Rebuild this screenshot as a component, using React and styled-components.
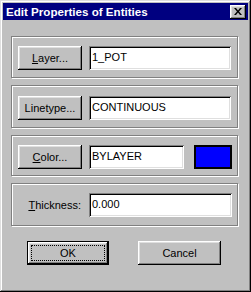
import React from "react"
import styled, { createGlobalStyle } from "styled-components"

const Global = createGlobalStyle`
  html, body {
    margin: 0;
    padding: 0;
    background: #c0c0c0;
  }
  * { box-sizing: border-box; }
`

const Window = styled.div`
  width: 251px;
  height: 292px;
  padding: 3px;
  background: #c0c0c0;
  font-family: "Liberation Sans", Arial, sans-serif;
  font-size: 11px;
  color: #000;
  box-shadow: inset -1px -1px #000, inset 1px 1px #dfdfdf,
    inset -2px -2px #808080, inset 2px 2px #fff;
  display: flex;
  flex-direction: column;
`

const TitleBar = styled.div`
  height: 17px;
  background: #000080;
  color: #fff;
  display: flex;
  align-items: center;
  justify-content: space-between;
  padding: 0 2px 0 3px;
`

const Title = styled.span`
  font-weight: bold;
  font-size: 11.6px;
  line-height: 17px;
`

const CloseBtn = styled.div`
  width: 16px;
  height: 14px;
  background: #c0c0c0;
  display: flex;
  align-items: center;
  justify-content: center;
  box-shadow: inset -1px -1px #000, inset 1px 1px #fff,
    inset -2px -2px #808080, inset 2px 2px #dfdfdf;
`

const Body = styled.div`
  padding: 16px 0 0 8px;
  display: flex;
  flex-direction: column;
`

const Groups = styled.div`
  display: flex;
  flex-direction: column;
  gap: 7px;
`

const Group = styled.div`
  width: 227px;
  height: ${p => p.$h}px;
  border: 1px solid #808080;
  box-shadow: 1px 1px 0 #fff, inset 1px 1px 0 #fff;
  padding: ${p => p.$top}px 0 0 6px;
  display: flex;
  align-items: flex-start;
  gap: 7px;
`

const Button = styled.div`
  width: ${p => p.$w}px;
  height: 24px;
  background: #c0c0c0;
  display: flex;
  align-items: center;
  justify-content: center;
  line-height: 13px;
  flex-shrink: 0;
  box-shadow: inset -1px -1px #000, inset 1px 1px #fff,
    inset -2px -2px #808080, inset 2px 2px #dfdfdf;
`

const DefaultButton = styled(Button)`
  border: 1px solid #000;
  padding: 3px;
`

const Focus = styled.div`
  width: 100%;
  height: 100%;
  border: 1px dotted #000;
  display: flex;
  align-items: center;
  justify-content: center;
`

const Label = styled.div`
  width: 64px;
  height: 24px;
  text-align: right;
  padding-right: 1px;
  line-height: 24px;
  flex-shrink: 0;
`

const Field = styled.div`
  width: ${p => p.$w}px;
  height: 24px;
  background: #fff;
  padding: 4px 3px 0;
  line-height: 14px;
  box-shadow: inset 1px 1px #808080, inset -1px -1px #fff,
    inset 2px 2px #000, inset -2px -2px #dfdfdf;
`

const Swatch = styled.div`
  width: 38px;
  height: 24px;
  margin-left: 3px;
  background: #0000ff;
  border: 2px solid #000;
`

const Actions = styled.div`
  display: flex;
  gap: 29px;
  padding-left: 16px;
  margin-top: 15px;
`

const Key = styled.u`
  text-decoration: underline;
  text-underline-offset: 1px;
`

export default function App() {
  return (
    <>
      <Global />
      <Window>
        <TitleBar>
          <Title>Edit Properties of Entities</Title>
          <CloseBtn>
            <svg width="8" height="7" viewBox="0 0 8 7">
              <path d="M0 0h2l2 2.5L6 0h2L5 3.5 8 7H6L4 4.5 2 7H0l3-3.5z" fill="#000" />
            </svg>
          </CloseBtn>
        </TitleBar>
        <Body>
          <Groups>
            <Group $h={42} $top={9}>
              <Button $w={64}><span><Key>L</Key>ayer...</span></Button>
              <Field $w={142}>1_POT</Field>
            </Group>
            <Group $h={43} $top={10}>
              <Button $w={64}>Linetype...</Button>
              <Field $w={142}>CONTINUOUS</Field>
            </Group>
            <Group $h={41} $top={9}>
              <Button $w={64}><span><Key>C</Key>olor...</span></Button>
              <Field $w={95}>BYLAYER</Field>
              <Swatch />
            </Group>
            <Group $h={43} $top={9}>
              <Label><Key>T</Key>hickness:</Label>
              <Field $w={143}>0.000</Field>
            </Group>
          </Groups>
          <Actions>
            <DefaultButton $w={82}><Focus>OK</Focus></DefaultButton>
            <Button $w={83}>Cancel</Button>
          </Actions>
        </Body>
      </Window>
    </>
  )
}
